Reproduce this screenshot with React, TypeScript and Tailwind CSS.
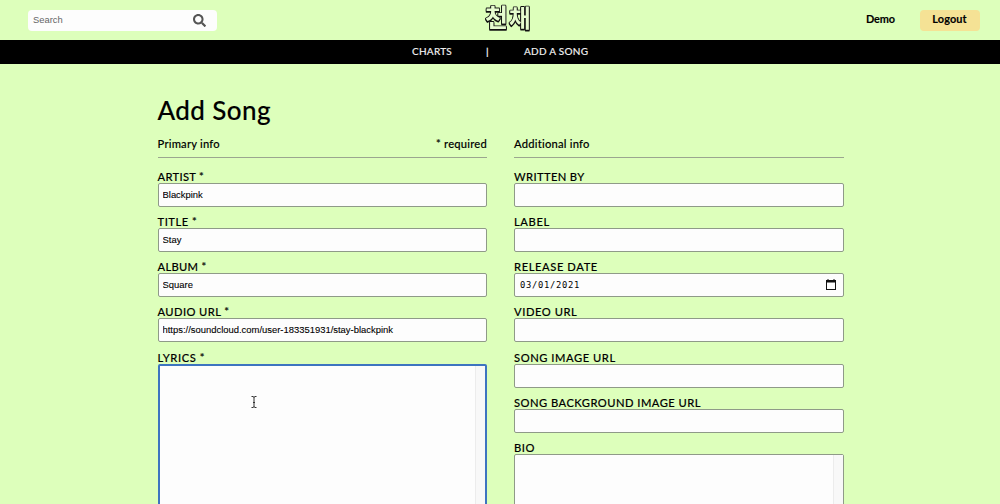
import React from "react";
import { FaSearch } from "react-icons/fa";

function Heading({ children }: { children: React.ReactNode }) {
  return <span className="block text-[11.2px] leading-[16px] tracking-[0.22px] whitespace-nowrap">{children}</span>;
}

function Label({ children, spacing }: { children: React.ReactNode; spacing: string }) {
  return <span className={`block h-[13px] text-[11.2px] leading-[14px] whitespace-nowrap ${spacing}`}>{children}</span>;
}

type FieldProps = { label: string; spacing: string; value?: string };

function Field({ label, spacing, value }: FieldProps) {
  return (
    <label className="block h-[45.17px]">
      <Label spacing={spacing}>{label}</Label>
      <input
        className="block h-[24px] w-full rounded-[2px] border border-[#8f9a88] bg-[#fdfdfd] px-[4px] pb-[1px] font-['Liberation_Sans',Arial,sans-serif] text-[9.43px] text-black outline-none [-webkit-text-stroke:0.1px]"
        defaultValue={value}
      />
    </label>
  );
}

function DateField() {
  return (
    <div className="h-[45.17px]">
      <Label spacing="tracking-[0.58px]">RELEASE DATE</Label>
      <div className="flex h-[24px] items-center justify-between rounded-[2px] border border-[#8f9a88] bg-[#fdfdfd] pr-[7px] pl-[5px]">
        <span className="font-['DejaVu_Sans_Mono',monospace] text-[8.8px] tracking-[0.7px] [-webkit-text-stroke:0]">03/01/2021</span>
        <svg className="mb-[1px] h-[11px] w-[10px]" viewBox="0 0 10 11">
          <path d="M1.5 0h1v1h5V0h1v1H10v10H0V1h1.5zM1 3.5V10h8V3.5z" fill="#111" fillRule="evenodd" />
        </svg>
      </div>
    </div>
  );
}

export default function App() {
  return (
    <div className="h-[504px] overflow-hidden bg-[#ddffbb] font-['Lato','Noto_Sans_CJK_KR',sans-serif] font-medium text-black [-webkit-text-stroke:0.12px]">
      <header className="grid h-[40px] grid-cols-[1fr_auto_1fr] items-center pr-[20px] pl-[28px]">
        <div className="flex h-[21px] w-[189px] items-center justify-between rounded-[4px] bg-[#fdfdfd] pr-[11px] pl-[5px]">
          <span className="font-['Liberation_Sans',Arial,sans-serif] text-[9.4px] text-[#666] [-webkit-text-stroke:0]">Search</span>
          <FaSearch className="size-[13px] text-[#555]" />
        </div>
        <svg className="mr-[-8px] h-[40px] w-[54px] overflow-visible" viewBox="0 0 54 40">
          <g
            className="drop-shadow-[0_1px_0_#111] [-webkit-text-stroke:1.7px_#111]"
            fontSize="25"
            fontWeight="700"
            fill="#e6fccf"
            stroke="#111"
            strokeWidth="1.7"
            strokeLinejoin="round"
            paintOrder="stroke"
            fontFamily="Noto Sans CJK KR, sans-serif"
          >
            <text>
              <tspan x="4" y="26.5">천</tspan>
              <tspan x="28" y="27" fontSize="23.5">채</tspan>
            </text>
          </g>
        </svg>
        <div className="flex items-center justify-end text-[10.9px] font-bold">
          <span className="mr-[25px] leading-[20px] -translate-y-px tracking-[-0.1px]">Demo</span>
          <button className="h-[21px] w-[60px] rounded-[4px] bg-[#f5e295] pr-[1px] pb-[2px] tracking-[0.1px]">Logout</button>
        </div>
      </header>
      <nav className="flex h-[24px] items-center bg-black pb-[2px] pl-[412px] text-[10px] text-[#eee]">
        <span className="w-[74px] tracking-[0.25px]">CHARTS</span>
        <span className="w-[38px] font-bold">|</span>
        <span className="tracking-[0.27px]">ADD A SONG</span>
      </nav>
      <main className="pt-[30px] pr-[156px] pl-[157.5px]">
        <h1 className="h-[42px] text-[26px] leading-[33px] tracking-[0.4px]">Add Song</h1>
        <div className="flex gap-[27px]">
          <section className="w-[329.5px]">
            <div className="mb-[12px] flex h-[22px] justify-between border-b border-[#9ba68f]">
              <Heading>Primary info</Heading>
              <Heading>* required</Heading>
            </div>
            <Field label="ARTIST *" value="Blackpink" spacing="tracking-[0.3px]" />
            <Field label="TITLE *" value="Stay" spacing="tracking-[0.5px]" />
            <Field label="ALBUM *" value="Square" spacing="tracking-[0.3px]" />
            <Field label="AUDIO URL *" value="https://soundcloud.com/user-183351931/stay-blackpink" spacing="tracking-[0.4px]" />
            <Label spacing="tracking-[0.55px]">LYRICS *</Label>
            <div className="relative flex h-[200px] justify-end rounded-[2px] border-2 border-[#3d74c0] bg-[#fdfdfd]">
              <div className="w-[10px] border-l border-[#ececec] bg-[#f8f8f8]" />
              <svg className="absolute top-[30px] left-[91px] h-[12px] w-[6px]" viewBox="0 0 6 12">
                <path d="M.5.5H2L3 1.3 4 .5h1.5M3 1v10M.5 11.5H2l1-.8 1 .8h1.5M2 6.5h2" fill="none" stroke="#333" />
              </svg>
            </div>
          </section>
          <section className="w-[330px]">
            <div className="mb-[12px] h-[22px] border-b border-[#9ba68f]">
              <Heading>Additional info</Heading>
            </div>
            <Field label="WRITTEN BY" spacing="tracking-[0.35px]" />
            <Field label="LABEL" spacing="tracking-[0.6px]" />
            <DateField />
            <Field label="VIDEO URL" spacing="tracking-[0.55px]" />
            <Field label="SONG IMAGE URL" spacing="tracking-[0.54px]" />
            <Field label="SONG BACKGROUND IMAGE URL" spacing="tracking-[0.46px]" />
            <Label spacing="tracking-[0.5px]">BIO</Label>
            <div className="flex h-[200px] justify-end rounded-[2px] border border-[#8f9a88] bg-[#fdfdfd]">
              <div className="w-[10px] border-l border-[#ececec] bg-[#f8f8f8]" />
            </div>
          </section>
        </div>
      </main>
    </div>
  );
}
